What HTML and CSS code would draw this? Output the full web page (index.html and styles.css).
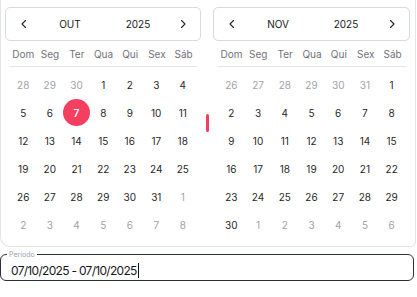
FILE: index.html
```html
<!DOCTYPE html>
<html lang="pt-BR">
<head>
    <meta charset="UTF-8">
    <meta name="viewport" content="width=device-width, initial-scale=1.0">
    <title>Período</title>
    <link rel="stylesheet" href="styles.css">
</head>
<body>
    <div class="popover">
        <div class="months">
            <div class="month">
                <div class="month-header">
                    <svg class="chev" viewBox="0 0 12 12"><path d="M7.5 2.5 4 6l3.5 3.5"/></svg>
                    <span>OUT</span>
                    <span>2025</span>
                    <svg class="chev chev-next" viewBox="0 0 12 12"><path d="M4.5 2.5 8 6 4.5 9.5"/></svg>
                </div>
                <div class="weekdays">
                    <span>Dom</span><span>Seg</span><span>Ter</span><span>Qua</span><span>Qui</span><span>Sex</span><span>Sáb</span>
                </div>
                <div class="days">
                    <span class="muted">28</span><span class="muted">29</span><span class="muted">30</span><span>1</span><span>2</span><span>3</span><span>4</span>
                    <span>5</span><span>6</span><span class="selected">7</span><span>8</span><span>9</span><span>10</span><span>11</span>
                    <span>12</span><span>13</span><span>14</span><span>15</span><span>16</span><span>17</span><span>18</span>
                    <span>19</span><span>20</span><span>21</span><span>22</span><span>23</span><span>24</span><span>25</span>
                    <span>26</span><span>27</span><span>28</span><span>29</span><span>30</span><span>31</span><span class="muted">1</span>
                    <span class="muted">2</span><span class="muted">3</span><span class="muted">4</span><span class="muted">5</span><span class="muted">6</span><span class="muted">7</span><span class="muted">8</span>
                </div>
            </div>

            <div class="divider"><span class="bar"></span></div>

            <div class="month month-right">
                <div class="month-header">
                    <svg class="chev" viewBox="0 0 12 12"><path d="M7.5 2.5 4 6l3.5 3.5"/></svg>
                    <span>NOV</span>
                    <span>2025</span>
                    <svg class="chev chev-next" viewBox="0 0 12 12"><path d="M4.5 2.5 8 6 4.5 9.5"/></svg>
                </div>
                <div class="weekdays">
                    <span>Dom</span><span>Seg</span><span>Ter</span><span>Qua</span><span>Qui</span><span>Sex</span><span>Sáb</span>
                </div>
                <div class="days">
                    <span class="muted">26</span><span class="muted">27</span><span class="muted">28</span><span class="muted">29</span><span class="muted">30</span><span class="muted">31</span><span>1</span>
                    <span>2</span><span>3</span><span>4</span><span>5</span><span>6</span><span>7</span><span>8</span>
                    <span>9</span><span>10</span><span>11</span><span>12</span><span>13</span><span>14</span><span>15</span>
                    <span>16</span><span>17</span><span>18</span><span>19</span><span>20</span><span>21</span><span>22</span>
                    <span>23</span><span>24</span><span>25</span><span>26</span><span>27</span><span>28</span><span>29</span>
                    <span>30</span><span class="muted">1</span><span class="muted">2</span><span class="muted">3</span><span class="muted">4</span><span class="muted">5</span><span class="muted">6</span>
                </div>
            </div>
        </div>
    </div>

    <fieldset class="field">
        <legend>Período</legend>
        <div class="value">07/10/2025 - 07/10/2025<span class="caret"></span></div>
    </fieldset>
</body>
</html>
```

FILE: styles.css
```css
body {
    margin: 0;
    width: 417px;
    height: 297px;
    overflow: hidden;
    background-color: #fff;
    font-family: Inter, "Noto Sans", sans-serif;
    color: #27272a;
}
.popover {
    box-sizing: border-box;
    width: 416px;
    height: 247px;
    padding: 7px 4px 0 4px;
    border: 1px solid #e2e4e8;
    border-top: none;
    border-radius: 0 0 5px 10px;
}
.months {
    display: flex;
}
.month {
    width: 196px;
}
.month-right {
    width: 197px;
}
.divider {
    width: 12px;
    display: flex;
    justify-content: center;
}
.bar {
    width: 3px;
    height: 18px;
    margin-top: 107px;
    border-radius: 2px;
    background-color: #f43f5e;
}
.month-header {
    box-sizing: border-box;
    height: 34px;
    display: grid;
    grid-template-columns: 12px 80px 56px 1fr;
    align-items: center;
    padding: 0 11px 0 12px;
    border: 1px solid #d6d9de;
    border-radius: 5px;
    font-size: 10px;
    color: #18181b;
    text-align: center;
}
.chev {
    width: 12px;
    height: 12px;
    fill: none;
    stroke: #27272a;
    stroke-width: 1.1;
    stroke-linecap: round;
    stroke-linejoin: round;
}
.chev-next {
    justify-self: end;
}
.weekdays {
    height: 26px;
    margin: 0 4px 0 5px;
    display: grid;
    grid-template-columns: repeat(7, 1fr);
    align-items: center;
    border-bottom: 1px solid #e2e4e8;
    box-sizing: border-box;
    font-size: 10px;
    color: #71717a;
    text-align: center;
}
.days {
    display: grid;
    grid-template-columns: repeat(7, 1fr);
    grid-auto-rows: 28px;
    padding: 4px 5px 0 5px;
    font-size: 10px;
    text-align: center;
}
.days span {
    display: flex;
    align-items: center;
    justify-content: center;
}
.days .muted {
    color: #a1a1aa;
}
.days .selected {
    width: 27px;
    height: 27px;
    margin: 0 auto;
    border-radius: 50%;
    background-color: #f43f5e;
    color: #fff;
    font-weight: 600;
}
.field {
    box-sizing: border-box;
    width: 414px;
    height: 31px;
    margin: 3px 0 0 0;
    padding: 0 9px;
    border: 1px solid #2b2f36;
    border-radius: 6px;
}
.field legend {
    margin-left: -3px;
    padding: 0 2px;
    font-size: 7px;
    line-height: 9px;
    color: #94a3b8;
}
.value {
    display: flex;
    align-items: center;
    height: 22px;
    padding-left: 1px;
    font-size: 12px;
    letter-spacing: -0.7px;
    color: #18181b;
}
.caret {
    width: 1px;
    height: 15px;
    margin-left: 1px;
    background-color: #111;
}
```
